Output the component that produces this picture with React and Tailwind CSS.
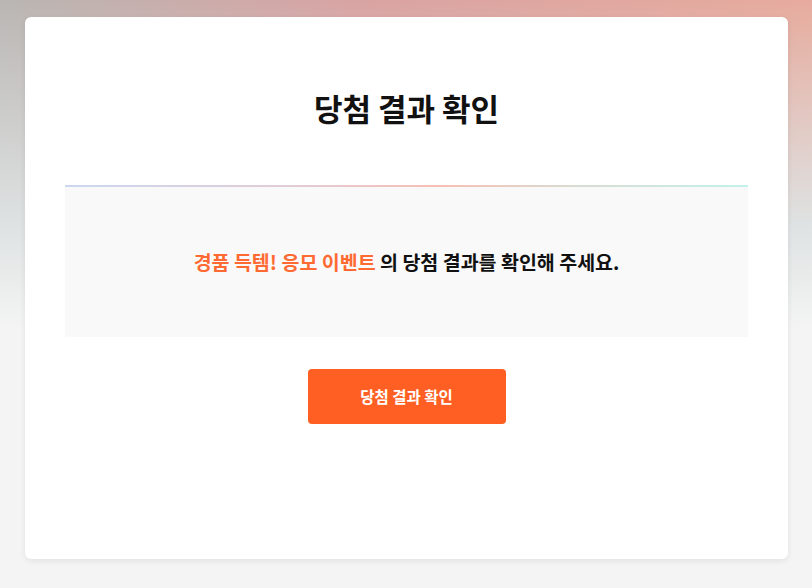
export default function App() {
  return (
    <div
      className="min-h-[588px] w-full pt-[17px] pb-[29px] bg-[linear-gradient(to_bottom,rgba(222,226,226,0)_0%,rgba(222,226,226,1)_38%,#f4f4f4_56%,#f4f4f4_100%),linear-gradient(to_right,#b9b6b3_0%,#d9a3a2_45%,#e7ab9d_100%)]"
      style={{ fontFamily: '"Noto Sans CJK KR", "Noto Sans", sans-serif' }}
    >
      {/* 카드 */}
      <div className="mx-[25px] h-[542px] w-[763px] rounded-md bg-white px-10 pt-[72px] shadow-[0_2px_6px_rgba(0,0,0,0.08)]">
        <h1 className="text-center text-[31px] font-bold leading-[38px] text-[#111]">
          당첨 결과 확인
        </h1>

        {/* 안내 박스 */}
        <div className="mt-[58px] bg-[#f9f9f9]">
          <div className="h-[2px] bg-[linear-gradient(to_right,#cbd8f1_0%,#e3cbd4_35%,#f7bfb3_55%,#d8dcd2_75%,#c3f1ec_100%)]" />
          <div className="flex h-[150px] items-center justify-center">
            <p className="text-[19.5px] font-semibold leading-[28px] text-[#111]">
              <span className="text-[#ff6a32]">경품 득템! 응모 이벤트</span> 의 당첨 결과를 확인해 주세요.
            </p>
          </div>
        </div>

        {/* 버튼 */}
        <div className="mt-8 flex justify-center">
          <button className="h-[55px] w-[198px] rounded bg-[#ff5f22] text-[15.5px] font-bold text-white">
            당첨 결과 확인
          </button>
        </div>
      </div>
    </div>
  );
}
